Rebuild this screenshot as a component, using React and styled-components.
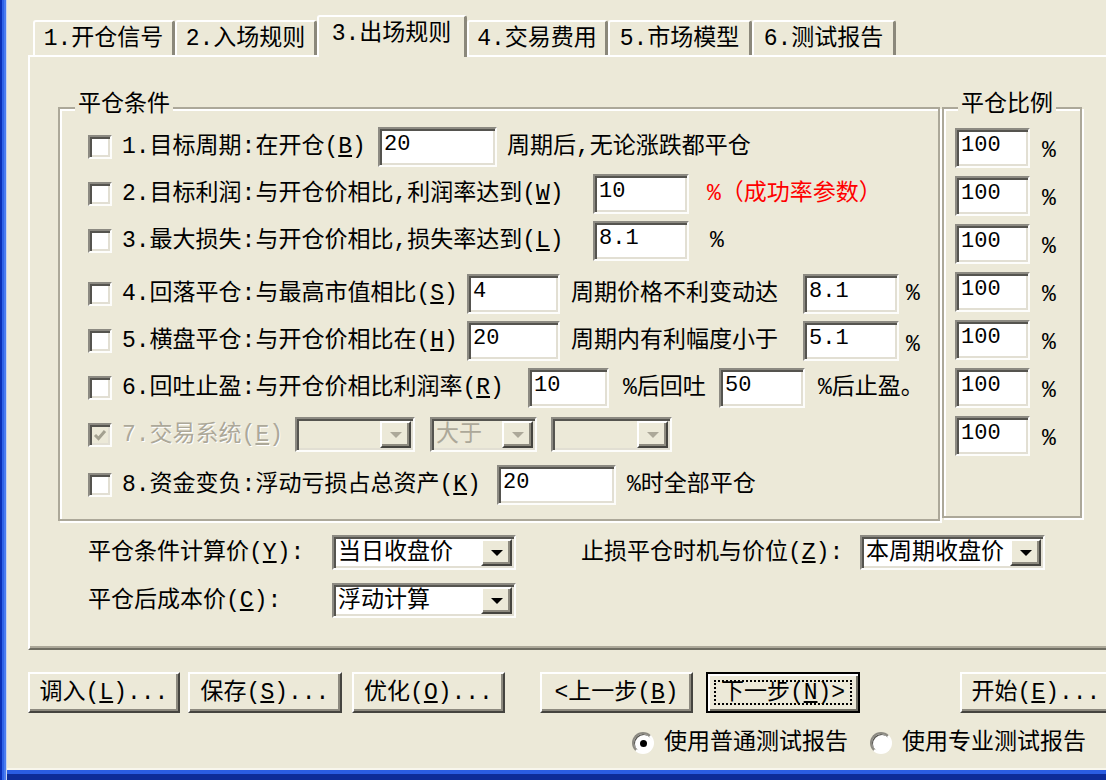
import styled, {createGlobalStyle, css} from 'styled-components'

const GlobalStyle = createGlobalStyle`
  html, body {
    margin: 0;
    padding: 0;
    background: #ece9d8;
  }
  body {
    font-family: "Liberation Mono", "Noto Sans CJK SC", monospace;
    color: #000;
  }
`

const sunken = css`
  box-sizing: border-box;
  border: 2px solid;
  border-color: #8c8a82 #fdfdfb #fdfdfb #8c8a82;
  box-shadow: inset 2px 2px 0 #55544f, inset -2px -2px 0 #e2dfd3;
`

const raised = css`
  box-sizing: border-box;
  border: 2px solid;
  border-color: #fff #45443f #45443f #fff;
  box-shadow: inset -2px -2px 0 #8d8a7f;
`

const Window = styled.div`
  width: 1106px;
  height: 780px;
  display: flex;
  overflow: hidden;
`

const LeftFrame = styled.div`
  width: 7px;
  flex: none;
  background: linear-gradient(to right, #0a2fb8 0 2px, #2f63e8 2px 4px, #4a7cf0 4px 6px, #c9d3ee 6px 7px);
`

const Main = styled.div`
  flex: 1;
  min-width: 0;
  display: flex;
  flex-direction: column;
`

const Client = styled.div`
  flex: 1;
  display: flex;
  flex-direction: column;
  padding: 15px 0 0 21px;
  background: #ece9d8;
`

const BottomFrame = styled.div`
  height: 12px;
  flex: none;
  background: linear-gradient(to bottom, #f8f6ec 0 2px, #2a5de2 2px 6px, #0d2c98 6px 12px);
`

const TabStrip = styled.div`
  display: flex;
  align-items: flex-end;
  height: 40px;
  padding-left: 5px;
  position: relative;
  z-index: 1;
`

const Tab = styled.div`
  width: ${p => p.$w}px;
  height: 35px;
  box-sizing: border-box;
  flex: none;
  display: flex;
  align-items: center;
  justify-content: center;
  border-top: 2px solid #fff;
  border-left: 2px solid #fff;
  border-right: 3px solid #8b887b;
  border-radius: 3px 3px 0 0;
  font-size: 23px;
  line-height: 28px;
  white-space: nowrap;
  background: #ece9d8;

  ${p => p.$active && css`
    height: 42px;
    margin-bottom: -2px;
    padding-bottom: 6px;
  `}
`

const Panel = styled.div`
  height: 595px;
  box-sizing: border-box;
  margin-right: -40px;
  border-top: 2px solid #fff;
  border-left: 2px solid #fff;
  border-bottom: 2px solid #6f6d62;
  box-shadow: inset 0 -2px 0 #aca899;
  padding: 50px 0 0 28px;
`

const GroupRow = styled.div`
  display: flex;
  align-items: flex-start;
  gap: 2px;
`

const Group = styled.div`
  position: relative;
  box-sizing: border-box;
  width: ${p => p.$w}px;
  height: ${p => p.$h}px;
  border: 2px solid #aca899;
  box-shadow: inset 2px 2px 0 #fff, 2px 2px 0 #fff;
`

const GroupTitle = styled.span`
  position: absolute;
  top: -18px;
  left: ${p => p.$x}px;
  padding: 0 3px;
  background: #ece9d8;
  font-size: 23px;
  line-height: 28px;
`

const Rows = styled.div`
  display: flex;
  flex-direction: column;
  padding: 14px 0 0 28px;
`

const Row = styled.div`
  display: flex;
  align-items: center;
  height: 47px;
  margin-top: ${p => p.$mt || 0}px;
`

const CheckBox = styled.span`
  ${sunken};
  width: 24px;
  height: 24px;
  flex: none;
  margin-right: 10px;
  display: flex;
  align-items: center;
  justify-content: center;
  background: ${p => (p.$disabled ? '#ece9d8' : '#fff')};
`

const Label = styled.span`
  flex: none;
  width: ${p => (p.$w ? `${p.$w}px` : 'auto')};
  margin-left: ${p => p.$ml || 0}px;
  margin-top: ${p => p.$mt || 0}px;
  font-size: 23px;
  line-height: 28px;
  white-space: nowrap;
  color: ${p => (p.$tone === 'red' ? '#f00' : p.$tone === 'gray' ? '#aca899' : '#000')};
  text-shadow: ${p => (p.$tone === 'gray' ? '1px 1px 0 #fff' : 'none')};
`

const Edit = styled.input`
  ${sunken};
  width: ${p => p.$w}px;
  height: 40px;
  flex: none;
  margin: 0;
  padding: 0 0 5px 4px;
  background: #fff;
  font-family: "Liberation Mono", monospace;
  font-size: 22px;
  color: #000;
  outline: none;
`

const Combo = styled.div`
  ${sunken};
  width: ${p => p.$w}px;
  height: 35px;
  flex: none;
  margin-left: ${p => p.$ml || 0}px;
  display: flex;
  background: ${p => (p.$disabled ? '#ece9d8' : '#fff')};
`

const ComboText = styled.span`
  flex: 1;
  padding: 2px 0 0 4px;
  font-size: 23px;
  line-height: 29px;
  white-space: nowrap;
  overflow: hidden;
  color: ${p => (p.$disabled ? '#aca899' : '#000')};
`

const ComboButton = styled.span`
  ${raised};
  width: 31px;
  flex: none;
  margin: 2px;
  display: flex;
  align-items: center;
  justify-content: center;
  background: #ece9d8;
`

const Arrow = styled.span`
  width: 0;
  height: 0;
  border-left: 6px solid transparent;
  border-right: 6px solid transparent;
  border-top: 6px solid ${p => (p.$disabled ? '#aca899' : '#000')};
`

const RatioList = styled.div`
  display: flex;
  flex-direction: column;
  gap: 8px;
  padding: 19px 0 0 11px;
`

const RatioRow = styled.div`
  display: flex;
  align-items: center;
`

const PriceGrid = styled.div`
  display: grid;
  grid-template-columns: 244px 184px 65px 279px 185px;
  grid-auto-rows: 35px;
  row-gap: 13px;
  align-items: center;
  margin: 14px 0 0 30px;
`

const ButtonBar = styled.div`
  display: flex;
  margin-top: 22px;
  height: 41px;
`

const Button = styled.button`
  ${raised};
  position: relative;
  width: ${p => p.$w}px;
  height: 41px;
  flex: none;
  margin: 0 0 0 ${p => p.$ml || 0}px;
  padding: 0;
  background: #ece9d8;
  font-family: inherit;
  font-size: 23px;
  line-height: 28px;
  color: #000;
  white-space: nowrap;

  ${p => p.$default && css`
    border-color: #000;
    box-shadow: inset 2px 2px 0 #fff, inset -2px -2px 0 #6f6d62;

    &::after {
      content: '';
      position: absolute;
      inset: 6px;
      border: 2px dotted #000;
    }
  `}
`

const RadioBar = styled.div`
  display: flex;
  align-items: center;
  margin-top: 16px;
  padding-left: 604px;
`

const Radio = styled.span`
  width: 22px;
  height: 22px;
  box-sizing: border-box;
  flex: none;
  border-radius: 50%;
  border: 2px solid;
  border-color: #8c8a82 #fff #fff #8c8a82;
  box-shadow: inset 1px 1px 0 #55544f;
  background: #fff;
  display: flex;
  align-items: center;
  justify-content: center;
  margin-right: 10px;

  &::after {
    content: '';
    width: 7px;
    height: 7px;
    border-radius: 50%;
    background: ${p => (p.$checked ? '#000' : 'transparent')};
  }
`

const RadioText = styled.span`
  font-size: 23px;
  line-height: 28px;
  margin-right: 22px;
  white-space: nowrap;
`

const tabs = [
  {w: 142, text: '1.开仓信号'},
  {w: 142, text: '2.入场规则'},
  {w: 150, text: '3.出场规则', active: true},
  {w: 141, text: '4.交易费用'},
  {w: 144, text: '5.市场模型'},
  {w: 144, text: '6.测试报告'},
]

const Key = ({k}) => <>(<u>{k}</u>)</>

function DropDown ({w, ml, text, disabled}) {
  return (
    <Combo $w={w} $ml={ml} $disabled={disabled}>
      <ComboText $disabled={disabled}>{text}</ComboText>
      <ComboButton>
        <Arrow $disabled={disabled}/>
      </ComboButton>
    </Combo>
  )
}

function Check ({disabled, checked}) {
  return (
    <CheckBox $disabled={disabled}>
      {checked && (
        <svg width='16' height='16' viewBox='0 0 16 16'>
          <polyline points='3,8 6.5,11.5 13,4' fill='none' stroke='#a3a090' strokeWidth='3'/>
        </svg>
      )}
    </CheckBox>
  )
}

export default function App () {
  return (
    <>
      <GlobalStyle/>
      <Window>
        <LeftFrame/>
        <Main>
          <Client>
            <TabStrip>
              {tabs.map(t => (
                <Tab key={t.text} $w={t.w} $active={t.active}>{t.text}</Tab>
              ))}
            </TabStrip>

            <Panel>
              <GroupRow>
                <Group $w={882} $h={414}>
                  <GroupTitle $x={15}>平仓条件</GroupTitle>
                  <Rows>
                    <Row>
                      <Check/>
                      <Label $w={256}>1.目标周期:在开仓<Key k='B'/></Label>
                      <Edit $w={119} defaultValue='20'/>
                      <Label $ml={10}>周期后,无论涨跌都平仓</Label>
                    </Row>
                    <Row>
                      <Check/>
                      <Label $w={471}>2.目标利润:与开仓价相比,利润率达到<Key k='W'/></Label>
                      <Edit $w={96} defaultValue='10'/>
                      <Label $ml={18} $tone='red'>%（成功率参数）</Label>
                    </Row>
                    <Row>
                      <Check/>
                      <Label $w={471}>3.最大损失:与开仓价相比,损失率达到<Key k='L'/></Label>
                      <Edit $w={96} defaultValue='8.1'/>
                      <Label $ml={21}>%</Label>
                    </Row>
                    <Row $mt={6}>
                      <Check/>
                      <Label $w={345}>4.回落平仓:与最高市值相比<Key k='S'/></Label>
                      <Edit $w={93} defaultValue='4'/>
                      <Label $ml={11} $w={232}>周期价格不利变动达</Label>
                      <Edit $w={96} defaultValue='8.1'/>
                      <Label $ml={7}>%</Label>
                    </Row>
                    <Row>
                      <Check/>
                      <Label $w={345}>5.横盘平仓:与开仓价相比在<Key k='H'/></Label>
                      <Edit $w={93} defaultValue='20'/>
                      <Label $ml={11} $w={232}>周期内有利幅度小于</Label>
                      <Edit $w={96} defaultValue='5.1'/>
                      <Label $ml={7} $mt={8}>%</Label>
                    </Row>
                    <Row>
                      <Check/>
                      <Label $w={406}>6.回吐止盈:与开仓价相比利润率<Key k='R'/></Label>
                      <Edit $w={81} defaultValue='10'/>
                      <Label $ml={14} $w={96}>%后回吐</Label>
                      <Edit $w={86} defaultValue='50'/>
                      <Label $ml={13}>%后止盈。</Label>
                    </Row>
                    <Row>
                      <Check disabled checked/>
                      <Label $w={173} $tone='gray'>7.交易系统<Key k='E'/></Label>
                      <DropDown w={120} text='' disabled/>
                      <DropDown w={107} ml={15} text='大于' disabled/>
                      <DropDown w={121} ml={14} text='' disabled/>
                    </Row>
                    <Row $mt={3}>
                      <Check/>
                      <Label $w={375}>8.资金变负:浮动亏损占总资产<Key k='K'/></Label>
                      <Edit $w={119} defaultValue='20'/>
                      <Label $ml={11}>%时全部平仓</Label>
                    </Row>
                  </Rows>
                </Group>

                <Group $w={140} $h={411}>
                  <GroupTitle $x={14}>平仓比例</GroupTitle>
                  <RatioList>
                    {Array.from({length: 7}).map((_, i) => (
                      <RatioRow key={i}>
                        <Edit $w={75} defaultValue='100'/>
                        <Label $ml={12} $mt={6}>%</Label>
                      </RatioRow>
                    ))}
                  </RatioList>
                </Group>
              </GroupRow>

              <PriceGrid>
                <Label>平仓条件计算价<Key k='Y'/>:</Label>
                <DropDown w={184} text='当日收盘价'/>
                <span/>
                <Label>止损平仓时机与价位<Key k='Z'/>:</Label>
                <DropDown w={185} text='本周期收盘价'/>
                <Label>平仓后成本价<Key k='C'/>:</Label>
                <DropDown w={184} text='浮动计算'/>
              </PriceGrid>
            </Panel>

            <ButtonBar>
              <Button $w={152}>调入<Key k='L'/>...</Button>
              <Button $w={154} $ml={8}>保存<Key k='S'/>...</Button>
              <Button $w={153} $ml={10}>优化<Key k='O'/>...</Button>
              <Button $w={153} $ml={35}>&lt;上一步<Key k='B'/></Button>
              <Button $w={154} $ml={13} $default>下一步<Key k='N'/>&gt;</Button>
              <Button $w={152} $ml={100}>开始<Key k='E'/>...</Button>
            </ButtonBar>

            <RadioBar>
              <Radio $checked/>
              <RadioText>使用普通测试报告</RadioText>
              <Radio/>
              <RadioText>使用专业测试报告</RadioText>
            </RadioBar>
          </Client>
          <BottomFrame/>
        </Main>
      </Window>
    </>
  )
}
